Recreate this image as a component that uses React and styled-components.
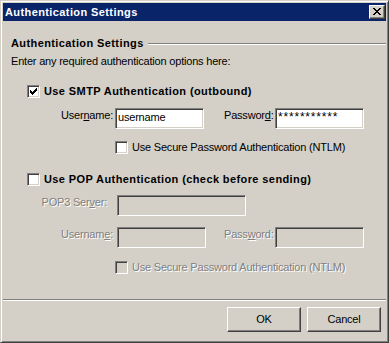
import React from 'react';
import styled, { createGlobalStyle } from 'styled-components';

const GlobalStyle = createGlobalStyle`
  html, body {
    margin: 0;
    padding: 0;
    background: #d4d0c8;
  }
  body {
    font-family: 'Liberation Sans', Arial, sans-serif;
    font-size: 11px;
    line-height: 13px;
    letter-spacing: -0.2px;
    color: #000;
  }
`;

const Window = styled.div`
  box-sizing: border-box;
  width: 389px;
  height: 343px;
  display: flex;
  flex-direction: column;
  background: #d4d0c8;
  border: 1px solid;
  border-color: #d4d0c8 #404040 #404040 #d4d0c8;
  box-shadow: inset 1px 1px #fff, inset -1px -1px #808080;
  padding: 2px;
`;

const TitleBar = styled.div`
  height: 18px;
  flex: none;
  display: flex;
  align-items: center;
  justify-content: space-between;
  padding: 0 1px 0 2px;
  background: #0a246a;
  color: #fff;
  font-weight: bold;
  letter-spacing: 0.4px;
`;

const CloseButton = styled.div`
  box-sizing: border-box;
  width: 16px;
  height: 14px;
  display: flex;
  align-items: center;
  justify-content: center;
  background: #d4d0c8;
  border: 1px solid;
  border-color: #fff #404040 #404040 #fff;
  box-shadow: inset -1px -1px #808080;
  padding: 0 1px 1px 0;
`;

const Body = styled.div`
  flex: 1;
  display: flex;
  flex-direction: column;
`;

const GroupHeader = styled.div`
  display: flex;
  align-items: center;
  margin-top: 16px;
  padding-left: 8px;
  font-weight: bold;
  letter-spacing: 0.4px;
`;

const EtchedLine = styled.div`
  flex: 1;
  margin-left: ${p => p.$gap || 0}px;
  border-top: 1px solid #808080;
  border-bottom: 1px solid #fff;
`;

const Hint = styled.div`
  margin-top: 5px;
  padding-left: 8px;
`;

const CheckRow = styled.label`
  display: flex;
  align-items: center;
  height: 13px;
  margin-top: ${p => p.$mt}px;
  padding-left: ${p => p.$indent}px;
  font-weight: ${p => (p.$bold ? 'bold' : 'normal')};
  letter-spacing: ${p => (p.$bold ? '0.4px' : '-0.2px')};
`;

const Box = styled.span`
  box-sizing: border-box;
  flex: none;
  width: 13px;
  height: 13px;
  display: flex;
  align-items: center;
  justify-content: center;
  background: ${p => (p.$disabled ? '#d4d0c8' : '#fff')};
  border: 1px solid;
  border-color: #808080 #fff #fff #808080;
  box-shadow: inset 1px 1px #404040, inset -1px -1px #d4d0c8;
`;

const Caption = styled.span`
  margin-left: 4px;
  white-space: nowrap;
  color: ${p => (p.$disabled ? '#808080' : '#000')};
  text-shadow: ${p => (p.$disabled ? '1px 1px 0 #fff' : 'none')};
`;

const FieldRow = styled.div`
  display: flex;
  align-items: flex-start;
  margin-top: ${p => p.$mt}px;
`;

const FieldLabel = styled.span`
  flex: none;
  width: ${p => p.$width}px;
  margin-left: ${p => p.$ml || 0}px;
  padding-top: 1px;
  text-align: ${p => (p.$right ? 'right' : 'left')};
  white-space: nowrap;
  color: ${p => (p.$disabled ? '#808080' : '#000')};
  text-shadow: ${p => (p.$disabled ? '1px 1px 0 #fff' : 'none')};
  u {
    text-decoration: underline;
    text-underline-offset: 1px;
  }
`;

const TextInput = styled.div`
  box-sizing: border-box;
  flex: none;
  width: ${p => p.$width}px;
  height: 21px;
  margin-left: ${p => p.$ml}px;
  padding: 1px 0 0 1px;
  background: ${p => (p.$disabled ? '#d4d0c8' : '#fff')};
  border: 1px solid;
  border-color: #808080 #fff #fff #808080;
  box-shadow: inset 1px 1px #404040, inset -1px -1px #d4d0c8;
  white-space: nowrap;
  overflow: hidden;
`;

const InputText = styled.span`
  display: block;
  padding: 1px 0 0 1px;
  font-size: ${p => (p.$masked ? '12px' : '11px')};
  letter-spacing: ${p => (p.$masked ? '0.8px' : '-0.2px')};
`;

const Footer = styled.div`
  flex: none;
  display: flex;
  flex-direction: column;
`;

const ButtonBar = styled.div`
  display: flex;
  justify-content: flex-end;
  gap: 6px;
  padding: 6px 5px 8px 0;
`;

const Button = styled.div`
  box-sizing: border-box;
  width: 74px;
  height: 25px;
  display: flex;
  align-items: center;
  justify-content: center;
  background: #d4d0c8;
  border: 1px solid;
  border-color: #fff #404040 #404040 #fff;
  box-shadow: inset -1px -1px #808080;
`;

const CloseGlyph = () => (
  <svg width="8" height="7" viewBox="0 0 8 7" shapeRendering="crispEdges">
    <path
      fill="#000"
      d="M0 0h2v1H0zM6 0h2v1H6zM1 1h2v1H1zM5 1h2v1H5zM2 2h4v1H2zM3 3h2v1H3zM2 4h4v1H2zM1 5h2v1H1zM5 5h2v1H5zM0 6h2v1H0zM6 6h2v1H6z"
    />
  </svg>
);

const CheckGlyph = () => (
  <svg width="7" height="7" viewBox="0 0 7 7" shapeRendering="crispEdges">
    <path
      fill="#000"
      d="M6 0h1v1H6zM5 1h2v1H5zM0 2h1v1H0zM4 2h3v1H4zM0 3h2v1H0zM3 3h3v1H3zM0 4h5v1H0zM1 5h3v1H1zM2 6h1v1H2z"
    />
  </svg>
);

const Checkbox = ({ checked, disabled }) => (
  <Box $disabled={disabled}>{checked && <CheckGlyph />}</Box>
);

const App = () => (
  <>
    <GlobalStyle />
    <Window>
      <TitleBar>
        <span>Authentication Settings</span>
        <CloseButton>
          <CloseGlyph />
        </CloseButton>
      </TitleBar>
      <Body>
        <GroupHeader>
          <span>Authentication Settings</span>
          <EtchedLine $gap={4} />
        </GroupHeader>
        <Hint>Enter any required authentication options here:</Hint>

        <CheckRow $mt={17} $indent={24} $bold>
          <Checkbox checked />
          <Caption>Use SMTP Authentication (outbound)</Caption>
        </CheckRow>
        <FieldRow $mt={10}>
          <FieldLabel $width={110} $right>
            User<u>n</u>ame:
          </FieldLabel>
          <TextInput $width={89} $ml={2}>
            <InputText>username</InputText>
          </TextInput>
          <FieldLabel $width={49} $ml={20}>
            Passwor<u>d</u>:
          </FieldLabel>
          <TextInput $width={89} $ml={2}>
            <InputText $masked>***********</InputText>
          </TextInput>
        </FieldRow>
        <CheckRow $mt={12} $indent={112}>
          <Checkbox />
          <Caption>Use Secure Password Authentication (NTLM)</Caption>
        </CheckRow>

        <CheckRow $mt={19} $indent={24} $bold>
          <Checkbox />
          <Caption>Use POP Authentication (check before sending)</Caption>
        </CheckRow>
        <FieldRow $mt={9}>
          <FieldLabel $width={104} $right $disabled>
            POP3 Ser<u>v</u>er:
          </FieldLabel>
          <TextInput $width={129} $ml={10} $disabled />
        </FieldRow>
        <FieldRow $mt={11}>
          <FieldLabel $width={110} $right $disabled>
            Usernam<u>e</u>:
          </FieldLabel>
          <TextInput $width={89} $ml={4} $disabled />
          <FieldLabel $width={49} $ml={18} $disabled>
            Pass<u>w</u>ord:
          </FieldLabel>
          <TextInput $width={89} $ml={2} $disabled />
        </FieldRow>
        <CheckRow $mt={13} $indent={112}>
          <Checkbox disabled />
          <Caption $disabled>Use Secure Password Authentication (NTLM)</Caption>
        </CheckRow>
      </Body>
      <Footer>
        <EtchedLine />
        <ButtonBar>
          <Button>OK</Button>
          <Button>Cancel</Button>
        </ButtonBar>
      </Footer>
    </Window>
  </>
);

export default App;
